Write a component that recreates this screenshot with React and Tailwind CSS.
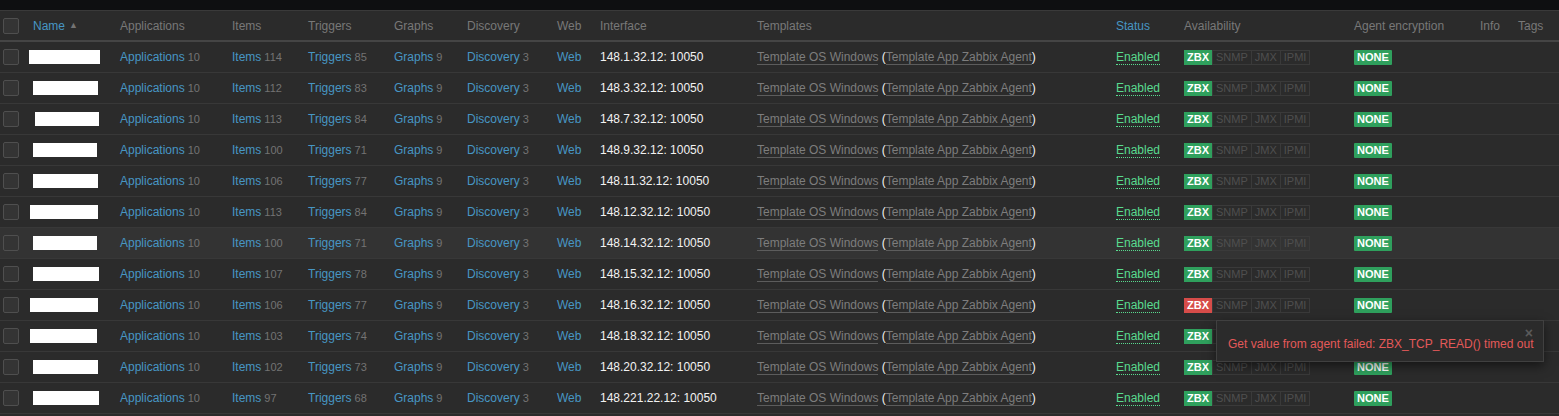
import React from "react";

const rows = [
  { items: 114, triggers: 85, ip: "148.1.32.12", blob: [29, 71] },
  { items: 112, triggers: 83, ip: "148.3.32.12", blob: [33, 65] },
  { items: 113, triggers: 84, ip: "148.7.32.12", blob: [35, 64] },
  { items: 100, triggers: 71, ip: "148.9.32.12", blob: [33, 64] },
  { items: 106, triggers: 77, ip: "148.11.32.12", blob: [33, 65] },
  { items: 113, triggers: 84, ip: "148.12.32.12", blob: [30, 68] },
  { items: 100, triggers: 71, ip: "148.14.32.12", blob: [33, 64], hover: true },
  { items: 107, triggers: 78, ip: "148.15.32.12", blob: [33, 66] },
  { items: 106, triggers: 77, ip: "148.16.32.12", blob: [30, 68], down: true },
  { items: 103, triggers: 74, ip: "148.18.32.12", blob: [30, 67] },
  { items: 102, triggers: 73, ip: "148.20.32.12", blob: [33, 65] },
  { items: 97, triggers: 68, ip: "148.221.22.12", blob: [33, 66] },
];

function Checkbox() {
  return <div className="ml-[3px] h-4 w-4 rounded-[2px] border border-[#4f4f4f] bg-[#343434]" />;
}

function Link({ label, count }) {
  return (
    <span>
      <span className="text-[#4796c4]">{label}</span>
      {count !== undefined && <span className="ml-[3px] text-[11px] text-[#737373]">{count}</span>}
    </span>
  );
}

function Tpl({ children }) {
  return <span className="border-b border-[#5c5c5c] text-[#7d7d7d]">{children}</span>;
}

export default function App() {
  return (
    <div
      className="relative h-[416px] w-[1559px] overflow-hidden bg-[#2b2b2b] text-[12px] leading-none"
      style={{ fontFamily: '"Liberation Sans", Arial, sans-serif' }}
    >
      <div className="h-[11px] border-b border-[#3a3a3a] bg-[#0e0f11]" />

      {/* header */}
      <div className="flex h-[31px] items-center border-b-2 border-[#454545] text-[#787878]">
        <div className="w-[33px]"><Checkbox /></div>
        <div className="flex w-[87px] items-center text-[#4796c4]">
          Name <span className="ml-[4px] text-[9px] text-[#737373]">▲</span>
        </div>
        <div className="w-[112px]">Applications</div>
        <div className="w-[76px]">Items</div>
        <div className="w-[86px]">Triggers</div>
        <div className="w-[73px]">Graphs</div>
        <div className="w-[90px]">Discovery</div>
        <div className="w-[43px]">Web</div>
        <div className="w-[157px]">Interface</div>
        <div className="w-[359px]">Templates</div>
        <div className="w-[68px] text-[#4796c4]">Status</div>
        <div className="w-[170px]">Availability</div>
        <div className="w-[126px]">Agent encryption</div>
        <div className="w-[38px]">Info</div>
        <div className="w-[41px]">Tags</div>
      </div>

      {rows.map((r, i) => (
        <div
          key={i}
          className={`flex h-[31px] items-center border-b border-[#383838] ${r.hover ? "bg-[#333333]" : ""}`}
        >
          <div className="w-[33px]"><Checkbox /></div>
          <div className="w-[87px]">
            <div
              className="h-[14px] bg-white"
              style={{ marginLeft: r.blob[0] - 33, width: r.blob[1] }}
            />
          </div>
          <div className="w-[112px]"><Link label="Applications" count={10} /></div>
          <div className="w-[76px]"><Link label="Items" count={r.items} /></div>
          <div className="w-[86px]"><Link label="Triggers" count={r.triggers} /></div>
          <div className="w-[73px]"><Link label="Graphs" count={9} /></div>
          <div className="w-[90px]"><Link label="Discovery" count={3} /></div>
          <div className="w-[43px]"><Link label="Web" /></div>
          <div className="w-[157px] text-[#f2f2f2]">{r.ip}: 10050</div>
          <div className="w-[359px] text-[#f2f2f2]">
            <Tpl>Template OS Windows</Tpl> (<Tpl>Template App Zabbix Agent</Tpl>)
          </div>
          <div className="w-[68px]">
            <span className="border-b border-dotted border-[#59db8f] text-[#59db8f]">Enabled</span>
          </div>
          <div className="flex w-[170px] items-center text-[11px]">
            <span
              className={`flex h-[15px] items-center px-[3px] font-bold text-white ${r.down ? "bg-[#d64c49]" : "bg-[#2fa05d]"}`}
            >
              ZBX
            </span>
            <span className="flex h-[15px] items-center border border-[#3a3a3a] px-[3px] text-[#4f4f4f]">SNMP</span>
            <span className="flex h-[15px] items-center border border-l-0 border-[#3a3a3a] px-[3px] text-[#4f4f4f]">JMX</span>
            <span className="flex h-[15px] items-center border border-l-0 border-[#3a3a3a] px-[3px] text-[#4f4f4f]">IPMI</span>
          </div>
          <div className="w-[126px]">
            <span className="inline-flex h-[15px] items-center rounded-[1px] bg-[#2fa05d] px-[3px] text-[11px] font-bold text-white">
              NONE
            </span>
          </div>
          <div className="w-[38px]" />
          <div className="w-[41px]" />
        </div>
      ))}

      {/* hint box */}
      <div className="absolute left-[1216px] top-[320px] h-[42px] w-[328px] border border-[#404040] bg-[#2b2b2b] shadow-[0_4px_10px_rgba(0,0,0,0.5)]">
        <span className="absolute right-[10px] top-[5px] text-[14px] font-bold text-[#5a5a5a]">×</span>
        <div className="pl-[11px] pt-[17px] text-[#e45959]">
          Get value from agent failed: ZBX_TCP_READ() timed out
        </div>
      </div>
    </div>
  );
}
